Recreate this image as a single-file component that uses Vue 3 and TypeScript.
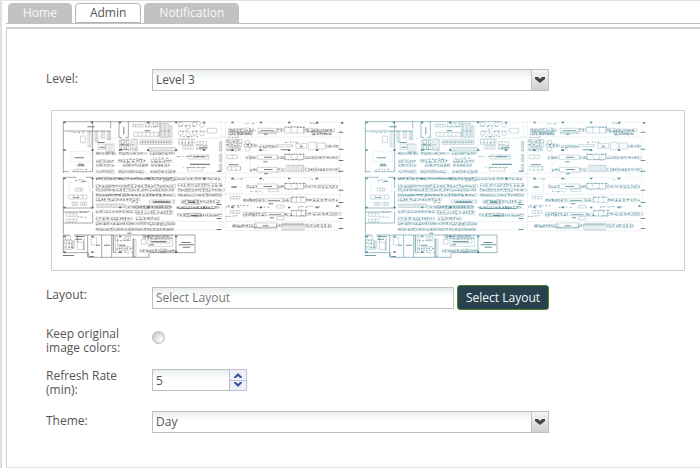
<script setup lang="ts">
import { ref } from 'vue'

type Strip = [x: number, y: number, width: number, height: number]
type Point = [x: number, y: number]

const tabs = ['Home', 'Admin', 'Notification']
const activeTab = ref('Admin')
const level = ref('Level 3')
const layoutName = ref('')
const keepColors = ref(false)
const refreshRate = ref(5)
const theme = ref('Day')

const plans = [
  { name: 'original', label: 'Floor plan, original colors' },
  { name: 'themed', label: 'Floor plan, theme colors' },
]

function step(amount: number) {
  refreshRate.value = Math.max(1, refreshRate.value + amount)
}

// Repeatable noise, so both plans show the same equipment.
let seed = 11
function noise(): number {
  seed = (seed * 16807) % 2147483647
  return seed / 2147483647
}

function box(x: number, y: number, w: number, h: number): string {
  return `M${x} ${y}h${w}v${h}h${-w}z`
}

// A line of small machines of uneven width.
function machines([x, y, width, height]: Strip): string {
  let path = ''
  let at = x
  while (at < x + width - 4) {
    const w = 5 + Math.round(noise() * 8)
    const h = Math.round(height * (0.55 + noise() * 0.45))
    path += box(at, y + Math.round((height - h) / 2), w, h)
    at += w + (noise() > 0.75 ? 4 : 1)
  }
  return path
}

// Part labels and dark details that run along a line of machines.
function marks([x, y, width, height]: Strip): string {
  let path = ''
  let at = x
  while (at < x + width - 4) {
    const w = 2 + Math.round(noise() * 6)
    path += `M${at} ${y + Math.round(height * (0.3 + noise() * 0.5))}h${w}`
    at += w + 2 + Math.round(noise() * 5)
  }
  return path
}

// Evenly divided cabinets.
function cabinets([x, y, width, height]: Strip, pitch: number): string {
  let path = box(x, y, width, height)
  for (let at = x + pitch; at < x + width; at += pitch) path += `M${at} ${y}v${height}`
  return path
}

const machineRows: Strip[] = [
  [138, 141, 62, 8], [207, 141, 78, 8], [300, 141, 76, 8],
  [140, 164, 54, 9], [205, 162, 86, 11], [304, 163, 70, 10],
  [140, 176, 54, 9], [220, 176, 72, 9], [304, 176, 58, 9],
  [140, 195, 60, 9], [206, 195, 80, 9], [302, 195, 72, 9],
  [138, 217, 376, 8],
  [138, 238, 238, 10], [384, 234, 132, 12],
  [138, 250, 238, 9], [384, 250, 132, 10],
  [138, 266, 238, 8], [384, 266, 132, 8],
  [138, 279, 130, 10], [394, 284, 116, 12],
  [226, 301, 140, 10], [380, 303, 130, 8],
  [138, 316, 112, 8], [258, 316, 116, 12],
  [138, 336, 112, 10], [258, 335, 74, 11], [382, 325, 130, 10],
  [138, 351, 236, 9],
  [138, 369, 236, 8],
  [536, 68, 75, 15], [536, 82, 72, 8], [682, 69, 20, 12], [765, 70, 84, 11], [786, 81, 60, 9],
  [582, 115, 42, 12], [628, 120, 50, 9], [830, 119, 36, 9],
  [588, 153, 34, 9], [684, 153, 20, 9], [766, 153, 100, 9],
  [600, 190, 22, 9], [684, 190, 20, 9], [766, 189, 100, 10],
  [590, 240, 34, 10], [684, 240, 20, 10], [766, 239, 100, 11],
  [580, 280, 66, 11], [700, 280, 24, 10], [768, 280, 100, 10],
  [580, 321, 66, 13], [704, 324, 24, 10], [766, 321, 100, 11],
  [548, 357, 66, 11], [680, 356, 16, 10], [766, 356, 82, 12],
  [530, 102, 46, 12], [530, 114, 42, 12], [530, 126, 42, 12],
  [270, 433, 110, 9], [278, 390, 84, 7],
]

const darkRows: Strip[] = [
  [60, 80, 50, 6], [540, 72, 80, 5], [540, 78, 72, 5], [540, 84, 64, 6], [770, 76, 84, 6], [790, 84, 60, 6],
  [138, 217, 236, 5], [138, 266, 238, 6],
  [240, 159, 45, 5], [310, 157, 45, 5], [340, 225, 40, 5], [245, 289, 24, 5], [300, 357, 56, 5],
  [704, 64, 60, 4], [704, 110, 40, 3], [704, 146, 60, 4], [704, 162, 60, 4], [704, 233, 60, 4],
  [704, 250, 60, 4], [724, 274, 46, 4], [724, 314, 46, 4], [724, 330, 46, 4], [626, 132, 30, 5],
  [582, 282, 40, 5], [582, 325, 40, 6], [548, 360, 46, 6], [532, 299, 70, 5], [620, 303, 38, 5],
  [528, 303, 40, 4], [744, 302, 70, 5], [600, 258, 44, 4], [528, 331, 38, 4], [534, 95, 34, 4],
  [544, 220, 32, 5], [628, 220, 18, 4], [780, 221, 24, 4], [780, 53, 26, 4], [586, 53, 30, 4],
  [70, 191, 46, 5], [76, 222, 30, 5], [90, 318, 34, 5], [82, 334, 34, 5], [280, 397, 90, 5],
  [196, 440, 60, 5], [380, 152, 50, 4], [430, 152, 50, 5], [400, 185, 70, 4],
  [386, 60, 50, 4], [390, 76, 80, 5], [390, 92, 60, 4], [286, 60, 40, 5], [334, 76, 30, 4],
  [212, 116, 48, 5], [212, 130, 48, 5], [196, 404, 44, 4], [196, 428, 60, 5], [44, 412, 30, 5],
  [44, 424, 30, 5], [386, 110, 44, 5], [440, 118, 28, 5], [440, 130, 28, 4],
]

const cabinetRows: [Strip, number][] = [
  [[270, 105, 96, 6], 8], [[270, 112, 96, 6], 8], [[294, 128, 84, 10], 6],
  [[140, 297, 84, 10], 5], [[298, 285, 76, 9], 9], [[258, 303, 108, 6], 8],
  [[704, 66, 58, 18], 19], [[704, 148, 58, 16], 19], [[710, 181, 52, 18], 5],
  [[704, 235, 58, 17], 19], [[724, 276, 44, 16], 15], [[724, 317, 44, 16], 15],
  [[696, 355, 66, 4], 6], [[696, 360, 66, 15], 6],
  [[532, 150, 30, 11], 15], [[532, 185, 40, 11], 13], [[540, 274, 30, 8], 10], [[540, 317, 30, 8], 10],
  [[56, 270, 54, 12], 14], [[66, 292, 18, 9], 6], [[92, 292, 18, 9], 6], [[76, 249, 22, 9], 8],
  [[50, 324, 30, 10], 10], [[50, 342, 30, 9], 10], [[42, 405, 24, 28], 8], [[66, 408, 8, 22], 4],
  [[252, 82, 76, 12], 12], [[248, 58, 32, 8], 8], [[286, 54, 38, 12], 12],
  [[208, 105, 28, 14], 7], [[208, 120, 28, 14], 7],
  [[246, 103, 16, 34], 6], [[168, 117, 24, 24], 6], [[114, 80, 10, 45], 5],
  [[190, 395, 12, 48], 6], [[248, 403, 10, 52], 5], [[222, 395, 20, 12], 7], [[208, 425, 32, 12], 8],
  [[334, 55, 9, 42], 5], [[346, 55, 9, 42], 5], [[358, 62, 8, 34], 4],
  [[386, 103, 46, 15], 10], [[398, 122, 32, 10], 8], [[440, 110, 30, 22], 10],
  [[508, 110, 7, 28], 4], [[508, 148, 7, 22], 4], [[508, 178, 7, 20], 4],
  [[135, 80, 8, 30], 4], [[154, 80, 10, 18], 5], [[172, 80, 9, 24], 4],
]

const outlines: Strip[] = [
  [92, 93, 14, 20], [144, 117, 22, 16], [624, 70, 56, 10], [624, 83, 56, 3], [622, 150, 60, 13], [622, 187, 60, 14],
  [622, 237, 60, 14], [646, 281, 54, 9], [646, 323, 58, 9], [614, 354, 66, 13], [614, 367, 66, 4],
  [680, 119, 48, 6], [738, 115, 12, 15], [756, 115, 14, 15], [776, 112, 22, 22], [802, 114, 24, 18],
  [680, 301, 22, 8], [680, 335, 22, 9], [656, 252, 30, 8], [472, 70, 28, 14], [416, 150, 60, 12],
  [412, 188, 46, 10], [404, 325, 50, 10], [294, 400, 74, 24], [302, 404, 58, 10], [274, 403, 14, 14],
  [124, 398, 16, 22], [46, 393, 16, 12], [82, 412, 18, 22], [330, 432, 18, 10], [406, 286, 40, 12],
]

const words: Strip[] = [
  [112, 64, 22, 3], [284, 76, 16, 3], [74, 157, 28, 3], [84, 176, 18, 3], [82, 181, 22, 3], [94, 227, 14, 3],
  [76, 393, 28, 3], [76, 401, 20, 3], [38, 450, 34, 3], [118, 453, 14, 3], [232, 383, 12, 3],
  [394, 411, 28, 3], [386, 418, 46, 3], [398, 425, 22, 3], [304, 408, 46, 4], [298, 418, 14, 3],
  [310, 289, 50, 4], [416, 290, 20, 4], [420, 176, 60, 4], [206, 419, 20, 3], [162, 419, 18, 3],
  [138, 419, 12, 3], [142, 111, 22, 3], [148, 125, 16, 3], [384, 309, 110, 2], [424, 330, 20, 3],
  [632, 75, 40, 2], [642, 155, 24, 3], [642, 192, 26, 3], [640, 243, 26, 3], [654, 286, 36, 2],
  [658, 328, 36, 2], [638, 361, 18, 3], [692, 133, 24, 3], [642, 86, 10, 3], [640, 169, 12, 3],
  [642, 205, 12, 3], [656, 295, 14, 3], [660, 337, 12, 3], [544, 244, 16, 4], [536, 178, 30, 3],
  [750, 124, 8, 3], [70, 277, 18, 2], [446, 127, 26, 3], [430, 154, 34, 3], [220, 66, 3, 22],
]

const columns: Point[] = [
  [43, 52], [125, 52], [210, 52], [294, 52], [378, 52], [462, 52], [547, 52], [632, 52], [717, 52], [801, 52], [876, 53],
  [43, 135], [127, 135], [210, 135], [294, 135], [378, 135], [462, 135], [547, 135], [632, 135], [717, 135], [801, 135],
  [43, 220], [127, 220], [210, 220], [294, 220], [462, 220], [547, 220], [632, 220], [717, 220], [801, 220],
  [43, 307], [127, 307], [210, 307], [294, 307], [462, 307], [547, 307], [632, 307], [717, 307], [801, 307], [862, 303],
  [43, 394], [127, 394], [210, 394], [294, 394], [378, 394], [43, 441], [127, 441], [210, 441], [378, 441],
]

const rowCodes: Point[] = [
  [866, 82], [866, 133], [866, 167], [866, 199], [866, 256], [866, 293], [866, 341], [866, 371],
  [500, 199], [500, 299], [500, 341], [500, 374],
]

const walls =
  'M40 204V50H450M40 78H182M128 50V200H66M40 200H56M182 50V70M207 50V97H216M235 50V97H226M330 50V97' +
  'M40 388V217H80M108 217H128V250M128 258V310M128 320V354H40M40 321H114M40 309H128' +
  'M60 390H40V443H115V457H297V443H435V390H72M113 390V457M155 390V457M185 390V457M378 390V443' +
  'M82 390V412M102 400V436M190 390V443M250 400V457'

const guides =
  'M450 51H880M60 140H122V170H62V140M136 204H870M136 217H870M136 100H510M480 96H870M136 375H514V52' +
  'M526 52V377H870V52M136 349H514M526 349H870M450 268H870M526 110H600V206M574 220V264H530M58 262V232H118V262'

const thin =
  machineRows.map(machines).join('') +
  cabinetRows.map(([strip, pitch]) => cabinets(strip, pitch)).join('') +
  outlines.map((o) => box(...o)).join('')

const dark = [...machineRows, ...darkRows].map(marks).join('')
const lettering = words.map(([x, y, w, h]) => box(x, y, w, h)).join('')
const pillars = columns.map(([x, y]) => box(x - 3, y - 2, 7, 5)).join('')
const codes = rowCodes.map(([x, y]) => box(x, y - 2, 14, 3)).join('')

// Clusters of round work cells near the upper middle of the plan.
const cells: Point[] = [
  [392, 58], [392, 84], [414, 66], [414, 90], [434, 58], [434, 84], [456, 60], [456, 86],
  [218, 110], [236, 110], [218, 128], [236, 128], [592, 112], [592, 132],
]
</script>

<template>
  <main class="page">
    <nav class="tabs" aria-label="Sections">
      <button
        v-for="tab in tabs"
        :key="tab"
        type="button"
        class="tab"
        :class="{ active: tab === activeTab }"
        @click="activeTab = tab"
      >{{ tab }}</button>
    </nav>

    <form class="panel" @submit.prevent>
      <div class="row">
        <label for="level">Level:</label>
        <div class="select-box">
          <select id="level" v-model="level">
            <option>Level 1</option>
            <option>Level 2</option>
            <option>Level 3</option>
          </select>
          <span class="arrow"><svg viewBox="0 0 16 20"><path d="M3 7h3l2 2 2-2h3v2l-5 4-5-4z" /></svg></span>
        </div>
      </div>

      <div class="preview">
        <svg
          v-for="plan in plans"
          :key="plan.name"
          class="plan"
          :class="plan.name"
          viewBox="36 45 864 420"
          role="img"
          :aria-label="plan.label"
        >
          <path class="guides" :d="guides" />
          <path class="thin" :d="thin" />
          <circle v-for="([x, y], i) in cells" :key="i" class="thin" :cx="x" :cy="y" r="7" />
          <path class="dark" :d="dark" />
          <path class="walls" :d="walls" />
          <path class="lettering" :d="lettering" />
          <path class="pillars" :d="pillars + codes" />
        </svg>
      </div>

      <div class="fields">
        <div class="row">
          <label for="layout">Layout:</label>
          <div class="picker">
            <input id="layout" v-model="layoutName" type="text" placeholder="Select Layout" />
            <button type="button" class="choose">Select Layout</button>
          </div>
        </div>
        <div class="row">
          <label for="keep" class="tall">Keep original image colors:</label>
          <input id="keep" v-model="keepColors" type="radio" :value="true" />
        </div>
        <div class="row">
          <label for="rate" class="tall">Refresh Rate (min):</label>
          <div class="spinner">
            <input id="rate" v-model.number="refreshRate" type="text" inputmode="numeric" />
            <div class="steps">
              <button type="button" aria-label="Increase" @click="step(1)">
                <svg viewBox="0 0 10 6"><path d="M1 5l4-4 4 4v1H7L5 4 3 6H1z" /></svg>
              </button>
              <button type="button" aria-label="Decrease" @click="step(-1)">
                <svg viewBox="0 0 10 6"><path d="M1 1l4 4 4-4V0H7L5 2 3 0H1z" /></svg>
              </button>
            </div>
          </div>
        </div>
        <div class="row">
          <label for="theme">Theme:</label>
          <div class="select-box">
            <select id="theme" v-model="theme">
              <option>Day</option>
              <option>Night</option>
            </select>
            <span class="arrow"><svg viewBox="0 0 16 20"><path d="M3 7h3l2 2 2-2h3v2l-5 4-5-4z" /></svg></span>
          </div>
        </div>
      </div>
    </form>
  </main>
</template>

<style>
body {
  margin: 0;
  background: #fff;
}
</style>

<style scoped>
.page {
  box-sizing: border-box;
  padding-left: 4px;
  border-top: 1px solid #e4e4e4;
  border-left: 2px solid #e0e0e0;
  color: #555;
  font: 12px/14px "Open Sans", "Noto Sans", sans-serif;
}

.page * {
  box-sizing: border-box;
}

input,
select,
button {
  margin: 0;
  color: inherit;
  font: inherit;
}

.tabs {
  display: flex;
  gap: 3px;
  height: 23px;
  padding: 2px 2px 0;
  border-bottom: 1px solid #c0c0c0;
}

.tab {
  height: 20px;
  padding: 0 14px;
  border: 1px solid #c2c2c2;
  border-radius: 4px 4px 0 0;
  background: #c2c2c2;
  color: #f8f8f8;
}

.tab.active {
  border-color: #b4b4b4;
  background: #fff;
  color: #555;
}

.panel {
  margin-top: 3px;
  padding: 40px 15px 14px 39px;
  border-top: 2px solid #d0d0d0;
  border-left: 1px solid #d0d0d0;
  border-bottom: 1px solid #e0e0e0;
}

.row {
  display: flex;
  align-items: flex-start;
  gap: 22px;
}

.row > label {
  flex: none;
  width: 84px;
  padding-top: 3px;
}

.row > label.tall {
  padding-top: 0;
}

.select-box,
.picker {
  position: relative;
  flex: 1;
  max-width: 397px;
}

input[type="text"],
select {
  display: block;
  width: 100%;
  height: 22px;
  padding: 0 3px;
  border: 1px solid #bfc1c1;
  border-radius: 0;
  outline: none;
  background: linear-gradient(#e9edee, #fff 9px);
  appearance: none;
}

input::placeholder {
  color: #777;
  opacity: 1;
}

.arrow {
  position: absolute;
  top: 1px;
  right: 1px;
  width: 17px;
  height: 20px;
  border-left: 1px solid #c4c4c4;
  background: linear-gradient(#f4f4f4, #e4e4e4 50%, #cecece);
  pointer-events: none;
}

.arrow svg {
  display: block;
  width: 16px;
  height: 20px;
  fill: #444;
}

.preview {
  display: flex;
  gap: 14px;
  height: 161px;
  margin: 19px 0 14px 5px;
  padding: 9px 10px;
  border: 1px solid #cecece;
}

.plan {
  flex: 0 1 288px;
  min-width: 0;
  height: 140px;
  fill: none;
  stroke: currentColor;
}

.original {
  color: #444;
}

.themed {
  color: #2b7080;
}

.thin {
  stroke-width: 1;
  opacity: 0.7;
}

.dark {
  stroke-width: 3;
  opacity: 0.5;
}

.walls {
  stroke-width: 2;
  opacity: 0.7;
}

.guides {
  stroke-width: 1;
  stroke-dasharray: 5 3;
  opacity: 0.4;
}

.lettering {
  fill: currentColor;
  stroke: none;
  opacity: 0.7;
}

.pillars {
  fill: currentColor;
  stroke: none;
  opacity: 0.75;
}

.fields {
  display: grid;
  grid-auto-rows: 42px;
}

.picker {
  display: flex;
  align-items: center;
  gap: 3px;
}

.picker input {
  flex: 1;
  min-width: 0;
}

.choose {
  flex: none;
  width: 92px;
  height: 25px;
  padding: 0;
  border: 1px solid #4f8222;
  border-radius: 3px;
  background: #29434e;
  color: #f4f6f6;
}

input[type="radio"] {
  width: 13px;
  height: 13px;
  margin-top: 4px;
  border: 1px solid #bbb;
  border-radius: 50%;
  background: radial-gradient(circle at 70% 70%, #fff, #ddd 50%, #bdbdc4);
  appearance: none;
}

input[type="radio"]:checked {
  background: radial-gradient(circle, #444 3px, #e8e8e8 4px);
}

.spinner {
  display: flex;
  width: 95px;
}

.spinner input {
  flex: 1;
  min-width: 0;
}

.steps {
  display: grid;
  flex: none;
  width: 17px;
  height: 22px;
}

.steps button {
  display: grid;
  place-items: center;
  padding: 0;
  border: 1px solid #c0c2d4;
  border-left: 0;
  background: #f0f1f6;
}

.steps button + button {
  border-top: 0;
}

.steps svg {
  width: 10px;
  height: 6px;
  fill: #3d559b;
}
</style>
